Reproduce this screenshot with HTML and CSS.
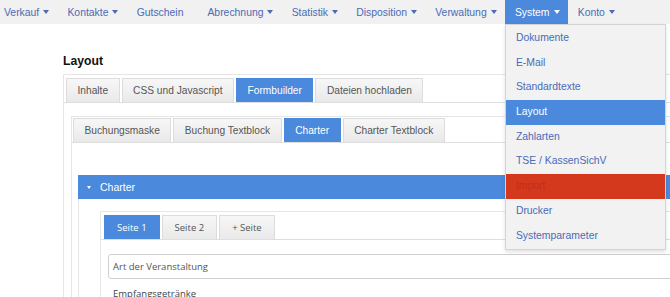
FILE: index.html
```html
<!DOCTYPE html>
<html lang="de">
<head>
    <meta charset="UTF-8">
    <meta name="viewport" content="width=device-width, initial-scale=1.0">
    <title>Layout</title>
    <link rel="stylesheet" href="styles.css">
</head>
<body>
    <nav class="topnav">
        <ul class="menu">
            <li class="menu-item">Verkauf<span class="caret"></span></li>
            <li class="menu-item">Kontakte<span class="caret"></span></li>
            <li class="menu-item plain">Gutschein</li>
            <li class="menu-item">Abrechnung<span class="caret"></span></li>
            <li class="menu-item">Statistik<span class="caret"></span></li>
            <li class="menu-item">Disposition<span class="caret"></span></li>
            <li class="menu-item">Verwaltung<span class="caret"></span></li>
            <li class="menu-item open">System<span class="caret"></span>
                <ul class="dropdown">
                    <li>Dokumente</li>
                    <li>E-Mail</li>
                    <li>Standardtexte</li>
                    <li class="current">Layout</li>
                    <li>Zahlarten</li>
                    <li>TSE / KassenSichV</li>
                    <li class="hover">Import</li>
                    <li>Drucker</li>
                    <li>Systemparameter</li>
                </ul>
            </li>
            <li class="menu-item">Konto<span class="caret"></span></li>
        </ul>
    </nav>

    <div class="main">
        <h1>Layout</h1>

        <div class="tabpanel outer">
            <div class="tabs">
                <span class="tab">Inhalte</span>
                <span class="tab">CSS und Javascript</span>
                <span class="tab active">Formbuilder</span>
                <span class="tab">Dateien hochladen</span>
            </div>
            <div class="tab-body outer-body">
                <div class="tabpanel inner">
                    <div class="tabs">
                        <span class="tab">Buchungsmaske</span>
                        <span class="tab">Buchung Textblock</span>
                        <span class="tab active">Charter</span>
                        <span class="tab">Charter Textblock</span>
                    </div>
                    <div class="tab-body inner-body">
                        <div class="section">
                            <div class="section-head"><span class="caret small"></span>Charter</div>
                            <div class="section-body">
                                <div class="tabpanel pages">
                                    <div class="tabs">
                                        <span class="tab active">Seite 1</span>
                                        <span class="tab">Seite 2</span>
                                        <span class="tab">+ Seite</span>
                                    </div>
                                    <div class="tab-body page-body">
                                        <div class="field">Art der Veranstaltung</div>
                                        <div class="field-label">Empfangsgetränke</div>
                                    </div>
                                </div>
                            </div>
                        </div>
                    </div>
                </div>
            </div>
        </div>
    </div>
</body>
</html>
```

FILE: styles.css
```css
html, body {
    overflow: hidden;
}
body {
    margin: 0;
    font-family: "Liberation Sans", Arial, sans-serif;
    background-color: #fff;
    color: #444;
}

/* Hauptmenü */
.topnav {
    height: 24px;
    background-color: #f1f1f1;
}
.menu {
    display: flex;
    list-style: none;
    margin: 0 0 0 -6px;
    padding: 0;
    height: 24px;
}
.menu-item {
    position: relative;
    display: flex;
    align-items: center;
    padding: 0 8.2px 0 10px;
    font-size: 10.4px;
    color: #4a6bb6;
}
.menu-item.plain {
    padding-right: 14px;
}
.menu-item.open {
    background-color: #4a89dc;
    color: #fff;
}
.caret {
    display: inline-block;
    width: 0;
    height: 0;
    margin-left: 4px;
    border-left: 3.5px solid transparent;
    border-right: 3.5px solid transparent;
    border-top: 4px solid currentColor;
}
.caret.small {
    margin: 0 9px 0 0;
    border-left-width: 2.5px;
    border-right-width: 2.5px;
    border-top-width: 3px;
}

.dropdown {
    position: absolute;
    top: 24px;
    left: 0;
    width: 159px;
    margin: 0;
    padding: 1px 0;
    list-style: none;
    background-color: #f2f2f2;
    border: 1px solid #d4d4d4;
    box-shadow: 0 2px 4px rgba(0, 0, 0, 0.12);
    z-index: 10;
}
.dropdown li {
    height: 24.7px;
    line-height: 24.7px;
    padding-left: 10px;
    color: #4a6bb6;
    white-space: nowrap;
}
.dropdown li.current {
    background-color: #4a89dc;
    color: #fff;
}
.dropdown li.hover {
    background-color: #d5391d;
    color: #c22e16;
}

/* Inhalt */
.main {
    width: 640px;
    margin-left: 63px;
    padding-top: 30px;
}
h1 {
    margin: 0 0 5px;
    font-size: 12.2px;
    line-height: 15px;
    color: #111;
}

.tabpanel {
    border: 1px solid #e6e6e6;
}
.tabs {
    display: flex;
    gap: 2px;
    border-bottom: 1px solid #dedede;
}
.outer > .tabs {
    padding: 3px 0 0 2px;
}
.inner > .tabs {
    padding: 1px 0 0 1px;
}
.pages > .tabs {
    padding: 3px 0 0 3px;
}
.tab {
    height: 23px;
    line-height: 23px;
    padding: 0 10.5px;
    font-size: 10.2px;
    color: #555;
    background: linear-gradient(#f7f7f7, #e9e9e9);
    border: 1px solid #dcdcdc;
    border-bottom: none;
    white-space: nowrap;
}
.tab.active {
    background: #4a89dc;
    border-color: #4a89dc;
    color: #fff;
}
.outer-body {
    padding: 13px 0 0 7px;
}
.inner-body {
    padding: 32px 0 0 6px;
}

.section-head {
    display: flex;
    align-items: center;
    height: 24px;
    padding-left: 9px;
    background-color: #4a89dc;
    color: #fff;
    font-size: 10.5px;
}
.section-body {
    border-left: 1px solid #e6e6e6;
    padding: 12px 0 0 21px;
}

.pages .tab {
    font-family: "Open Sans", sans-serif;
    font-size: 9.5px;
    padding: 0 12px;
}
.page-body {
    padding: 14px 0 0 7px;
    font-family: "Open Sans", sans-serif;
    font-size: 9.5px;
}
.field {
    height: 23px;
    line-height: 23px;
    padding-left: 4px;
    border: 1px solid #cfcfcf;
    border-radius: 3px;
    color: #555;
}
.field-label {
    margin-top: 8px;
    padding-left: 5px;
    line-height: 13px;
    color: #444;
}
```
